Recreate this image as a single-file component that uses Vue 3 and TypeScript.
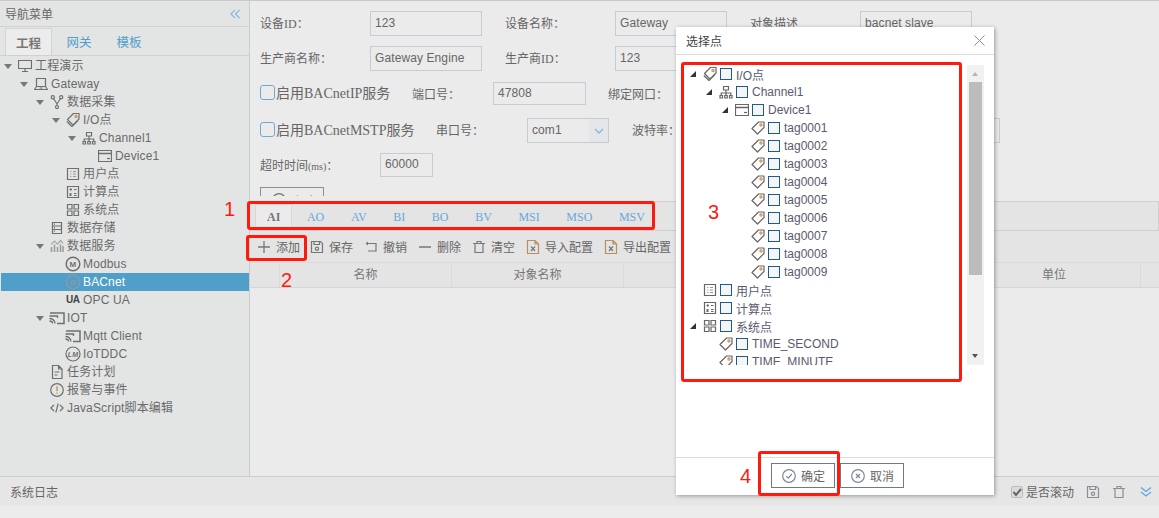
<script setup lang="ts">
interface NavRow { text: string; depth: number; icon: string; open?: boolean; active?: boolean }
interface PickRow { text: string; depth: number; icon: string; open?: boolean }

const navRows: NavRow[] = [
  { text: '工程演示', depth: 0, icon: 'monitor', open: true },
  { text: 'Gateway', depth: 1, icon: 'laptop', open: true },
  { text: '数据采集', depth: 2, icon: 'fork', open: true },
  { text: 'I/O点', depth: 3, icon: 'tags', open: true },
  { text: 'Channel1', depth: 4, icon: 'channel', open: true },
  { text: 'Device1', depth: 5, icon: 'device' },
  { text: '用户点', depth: 3, icon: 'list' },
  { text: '计算点', depth: 3, icon: 'calc' },
  { text: '系统点', depth: 3, icon: 'grid' },
  { text: '数据存储', depth: 2, icon: 'storage' },
  { text: '数据服务', depth: 2, icon: 'chart', open: true },
  { text: 'Modbus', depth: 3, icon: 'modbus' },
  { text: 'BACnet', depth: 3, icon: 'bacnet', active: true },
  { text: 'OPC UA', depth: 3, icon: 'ua' },
  { text: 'IOT', depth: 2, icon: 'cast', open: true },
  { text: 'Mqtt Client', depth: 3, icon: 'cast' },
  { text: 'IoTDDC', depth: 3, icon: 'lm' },
  { text: '任务计划', depth: 2, icon: 'doc' },
  { text: '报警与事件', depth: 2, icon: 'alert' },
  { text: 'JavaScript脚本编辑', depth: 2, icon: 'code' }
]

const wideIcons = ['modbus', 'bacnet', 'lm', 'cast']

const tags: PickRow[] = Array.from({ length: 9 }, (_, i) => ({
  text: `tag000${i + 1}`, depth: 3, icon: 'tag'
}))

const pickRows: PickRow[] = [
  { text: 'I/O点', depth: 0, icon: 'tags', open: true },
  { text: 'Channel1', depth: 1, icon: 'channel', open: true },
  { text: 'Device1', depth: 2, icon: 'device', open: true },
  ...tags,
  { text: '用户点', depth: 0, icon: 'list' },
  { text: '计算点', depth: 0, icon: 'calc' },
  { text: '系统点', depth: 0, icon: 'grid', open: true },
  { text: 'TIME_SECOND', depth: 1, icon: 'tag' },
  { text: 'TIME_MINUTE', depth: 1, icon: 'tag' }
]

const objectTabs = ['AI', 'AO', 'AV', 'BI', 'BO', 'BV', 'MSI', 'MSO', 'MSV']
const tools = [
  { text: '保存', icon: 'save' },
  { text: '撤销', icon: 'undo' },
  { text: '删除', icon: 'minus' },
  { text: '清空', icon: 'trash' },
  { text: '导入配置', icon: 'xls' },
  { text: '导出配置', icon: 'xls' }
]
const columns = ['名称', '对象名称', '', '', '单位']
</script>

<template>
  <div class="page">
    <svg class="defs" aria-hidden="true">
      <defs>
        <symbol id="monitor" viewBox="0 0 14 14"><path d="M.5 1.500h13v8H.5zM7 9.500v3M4 12.500h6" fill="none" stroke="currentColor" /></symbol>
        <symbol id="laptop" viewBox="0 0 14 14"><path d="M2.500 1.500h9v8h-9zM2.500 9.500L.5 12.500h13l-2-3M5.500 11h3" fill="none" stroke="currentColor" /></symbol>
        <symbol id="fork" viewBox="0 0 14 14"><path d="M3.500 3.500L7 9l3.500-5.500M7 9v2" fill="none" stroke="currentColor" /><circle cx="2.800" cy="2.300" r="1.600" fill="none" stroke="currentColor" /><circle cx="11.200" cy="2.300" r="1.600" fill="none" stroke="currentColor" /><circle cx="7" cy="12" r="1.500" fill="none" stroke="currentColor" /></symbol>
        <symbol id="tag" viewBox="0 0 14 14"><path d="M7.500 1h5.500v5.500l-6.500 6.500L1 7.500z" fill="none" stroke="currentColor" stroke-linejoin="round" /><circle cx="10" cy="4" r="1.100" fill="none" stroke="#c9914e" /></symbol>
        <symbol id="tags" viewBox="0 0 14 14"><path d="M7.500 .5h5.500v5.500l-6 6-5.500-5.500zM.8 8.500L6 13.500l6-6" fill="none" stroke="currentColor" stroke-linejoin="round" /><circle cx="10" cy="3.500" r="1.100" fill="none" stroke="#c9914e" /></symbol>
        <symbol id="channel" viewBox="0 0 14 14"><path d="M4.500 1.500h5v3.500h-5zM1 10.500h2.500v2.500H1zM5.750 10.500h2.500v2.500h-2.500zM10.500 10.500H13v2.500h-2.500zM7 5v5.500M2.250 10.500V8h9.500v2.500" fill="none" stroke="currentColor" /></symbol>
        <symbol id="device" viewBox="0 0 14 14"><path d="M.5 1.500h13v11H.5z" fill="none" stroke="currentColor" /><path d="M.5 4.500h13" stroke="currentColor" stroke-width="1.500" /><path d="M9 9.500h3" stroke="currentColor" /></symbol>
        <symbol id="list" viewBox="0 0 14 14"><path d="M1.500 1.500h11v11h-11z" fill="none" stroke="currentColor" /><path d="M4 4.500h1.500M4 7h1.500M4 9.500h1.500" stroke="#d6a26c" /><path d="M7 4.500h3M7 7h3M7 9.500h3" stroke="#8f9aa5" /></symbol>
        <symbol id="calc" viewBox="0 0 14 14"><path d="M1.500 1.500h11v11h-11zM3.500 4.500h2.500M4.750 3.250v2.500M8 4.500h2.500M3.500 8.500l2 2M5.500 8.500l-2 2M8 8.500h2.500M8 10.500h2.500" fill="none" stroke="currentColor" /></symbol>
        <symbol id="grid" viewBox="0 0 14 14"><path d="M1.500 1.500h4.500v4.500H1.500zM8 1.500h4.500v4.500H8zM1.500 8h4.500v4.500H1.500zM8 8h4.500v4.500H8z" fill="none" stroke="currentColor" /></symbol>
        <symbol id="storage" viewBox="0 0 14 14"><path d="M2.500 1.500h9v11h-9zM2.500 5h9M2.500 8.500h9" fill="none" stroke="currentColor" /><path d="M4 3.200h1M4 6.700h1M4 10.200h1" stroke="currentColor" /></symbol>
        <symbol id="chart" viewBox="0 0 14 14"><path d="M1.500 13V8M4.500 13V5.500M7.500 13V8M10.500 13V5.500M13 13V7" fill="none" stroke="#999" stroke-width="1.500" /><path d="M1 5.500L4.500 2 7.500 5 10.500 1.500l2.500 3" fill="none" stroke="#a9a9a9" /></symbol>
        <symbol id="modbus" viewBox="0 0 16 16"><circle cx="8" cy="8" r="6.800" fill="none" stroke="currentColor" stroke-width="1.500" /><text x="8" y="11" text-anchor="middle" font-size="8" font-weight="700" font-family="Liberation Sans" fill="currentColor">M</text></symbol>
        <symbol id="bacnet" viewBox="0 0 16 16"><circle cx="8" cy="8" r="6.800" fill="none" stroke="#8a9aa6" stroke-width="1.500" /><text x="8" y="11" text-anchor="middle" font-size="8" font-weight="700" font-family="Liberation Sans" fill="#8a9aa6">B</text></symbol>
        <symbol id="lm" viewBox="0 0 16 16"><circle cx="8" cy="8" r="7" fill="none" stroke="currentColor" /><text x="8" y="10.500" text-anchor="middle" font-size="7" font-weight="700" font-style="italic" font-family="Liberation Sans" fill="currentColor">LM</text></symbol>
        <symbol id="cast" viewBox="0 0 16 16"><path d="M1 3h14v10.500H8" fill="none" stroke="currentColor" stroke-width="1.500" /><path d="M.5 6h8v2M.5 8.500c3 0 5 2 5.500 5M.5 11c1.500 0 3 1 3 2.500" fill="none" stroke="currentColor" stroke-width="1.300" /></symbol>
        <symbol id="doc" viewBox="0 0 14 14"><path d="M2.500.5h6l3.500 3.500v9.500h-9.500zM8.500.5v3.500H12M4.500 7h5M4.500 10h3" fill="none" stroke="currentColor" /></symbol>
        <symbol id="alert" viewBox="0 0 14 14"><circle cx="7" cy="7" r="6.300" fill="none" stroke="currentColor" /><path d="M7 3.200v5M7 9.400v1.400" stroke="#c9914e" stroke-width="1.400" /></symbol>
        <symbol id="code" viewBox="0 0 14 14"><path d="M4 4L.8 7 4 10M10 4l3.200 3-3.200 3M8.200 2.500l-2.400 9" fill="none" stroke="currentColor" /></symbol>
        <symbol id="save" viewBox="0 0 14 14"><path d="M1.500 1.500h9l2 2v9h-11zM4 1.500v3h5.500v-3" fill="none" stroke="currentColor" /><circle cx="7" cy="8.800" r="1.600" fill="none" stroke="currentColor" /></symbol>
        <symbol id="undo" viewBox="0 0 14 14"><path d="M3 3.500h9v7.500H4" fill="none" stroke="currentColor" stroke-width="1.200" /><path d="M1.500 3.500L4 1.500v4z" fill="currentColor" /></symbol>
        <symbol id="minus" viewBox="0 0 14 14"><path d="M1 7h12" stroke="currentColor" stroke-width="1.500" /></symbol>
        <symbol id="trash" viewBox="0 0 14 14"><path d="M3 3.500v9h8v-9M1 3.500h12M5 3.500v-2h4v2" fill="none" stroke="currentColor" /></symbol>
        <symbol id="xls" viewBox="0 0 14 14"><path d="M1.500 .5h7.500l3.500 3.500v9.500h-11zM9 .5V4h3.500" fill="none" stroke="#b98f5f" /><path d="M5 6.500l4 4.500M9 6.500l-4 4.500" stroke="currentColor" /></symbol>
        <symbol id="ok" viewBox="0 0 14 14"><circle cx="7" cy="7" r="6.300" fill="none" stroke="currentColor" /><path d="M4.300 7.200l2 2 3.500-4.200" fill="none" stroke="currentColor" /></symbol>
        <symbol id="no" viewBox="0 0 14 14"><circle cx="7" cy="7" r="6.300" fill="none" stroke="currentColor" /><path d="M5 5l4 4M9 5l-4 4" stroke="currentColor" stroke-width="1.300" /></symbol>
        <symbol id="plus" viewBox="0 0 14 14"><path d="M7 1v12M1 7h12" stroke="currentColor" stroke-width="1.300" /></symbol>
      </defs>
    </svg>

    <div class="workspace">
      <aside class="nav">
        <header class="nav-head">
          <span>导航菜单</span>
          <svg class="collapse" viewBox="0 0 12 10"><path d="M5.500 .5L1 5l4.500 4.500M10.500 .5L6 5l4.500 4.500" fill="none" stroke="currentColor" stroke-width="1.200" /></svg>
        </header>
        <div class="nav-tabs">
          <span class="nav-tab on">工程</span>
          <span class="nav-tab">网关</span>
          <span class="nav-tab">模板</span>
        </div>
        <ul class="nav-tree">
          <li
            v-for="row in navRows"
            :key="row.text"
            class="nav-row"
            :class="{ active: row.active }"
            :style="{ paddingLeft: 4 + row.depth * 16 - (row.active ? 1 : 0) + 'px' }"
          >
            <i class="caret" :class="{ shown: row.open }"></i>
            <b v-if="row.icon === 'ua'" class="ua">UA</b>
            <svg v-else class="ic" :class="{ wide: wideIcons.includes(row.icon) }"><use :href="'#' + row.icon" /></svg>
            <span class="nav-text">{{ row.text }}</span>
          </li>
        </ul>
      </aside>

      <main class="content">
        <section class="form">
          <div class="line r1">
            <label class="lab w110">设备ID：</label><span class="inp w112 mr23">123</span>
            <label class="lab w110">设备名称：</label><span class="inp w112 mr23">Gateway</span>
            <label class="lab w110">对象描述</label><span class="inp w112">bacnet slave</span>
          </div>
          <div class="line r2">
            <label class="lab w110">生产商名称：</label><span class="inp w112 mr23">Gateway Engine</span>
            <label class="lab w110">生产商ID：</label><span class="inp w112">123</span>
          </div>
          <div class="line r3">
            <i class="check"></i><label class="big w136">启用BACnetIP服务</label>
            <label class="lab w81">端口号：</label><span class="inp w93 mr22">47808</span>
            <label class="lab">绑定网口：</label>
          </div>
          <div class="line r4">
            <i class="check"></i><label class="big w160">启用BACnetMSTP服务</label>
            <label class="lab w91">串口号：</label>
            <span class="inp sel mr23">com1<em class="sel-btn"><svg viewBox="0 0 10 6"><path d="M1 1l4 4 4-4" fill="none" stroke="currentColor" stroke-width="1.500" /></svg></em></span>
            <label class="lab w60">波特率：</label><span class="inp w308"></span>
          </div>
          <div class="line r5">
            <label class="lab w120">超时时间<small>(ms)</small>：</label><span class="inp w53">60000</span>
          </div>
          <button class="form-save" type="button"><svg class="ic save-ic"><use href="#ok" /></svg>保存</button>
        </section>

        <nav class="obj-tabs">
          <span v-for="t in objectTabs" :key="t" class="obj-tab" :class="{ on: t === 'AI' }">{{ t }}</span>
        </nav>

        <div class="toolbar">
          <span class="tool first"><svg class="ic tool-ic"><use href="#plus" /></svg>添加</span>
          <span v-for="t in tools" :key="t.text" class="tool"><svg class="ic tool-ic"><use :href="'#' + t.icon" /></svg>{{ t.text }}</span>
        </div>

        <div class="thead">
          <span class="th-lead"></span>
          <span v-for="(c, i) in columns" :key="i" class="th">{{ c }}</span>
        </div>
      </main>
    </div>

    <footer class="log">
      <span class="log-title">系统日志</span>
      <span class="log-side">
        <i class="log-check"><svg viewBox="0 0 10 10"><path d="M1.500 5l2.500 3 5-6" fill="none" stroke="#666" stroke-width="2" /></svg></i>
        <span class="log-text">是否滚动</span>
        <svg class="ic log-ic"><use href="#save" /></svg>
        <svg class="ic log-ic"><use href="#trash" /></svg>
        <svg class="log-down" viewBox="0 0 12 12"><path d="M1 1.500l5 4 5-4M1 6l5 4 5-4" fill="none" stroke="currentColor" stroke-width="1.300" /></svg>
      </span>
    </footer>
    <div class="foot-strip"></div>

    <div class="dialog">
      <header class="dlg-head">
        <span>选择点</span>
        <svg class="dlg-close" viewBox="0 0 11 11"><path d="M.5 .5l10 10M10.500 .5l-10 10" stroke="currentColor" /></svg>
      </header>
      <div class="dlg-body">
        <div class="pick">
          <div
            v-for="row in pickRows"
            :key="row.text"
            class="pick-row"
            :style="{ paddingLeft: 14 + row.depth * 16 + 'px' }"
          >
            <i class="tri" :class="{ shown: row.open }"></i>
            <svg class="ic pick-ic"><use :href="'#' + row.icon" /></svg>
            <i class="box"></i>
            <span>{{ row.text }}</span>
          </div>
        </div>
        <div class="scroll">
          <i class="arrow up"></i>
          <i class="thumb"></i>
          <i class="arrow down"></i>
        </div>
      </div>
      <footer class="dlg-foot">
        <button class="btn" type="button"><svg class="ic btn-ic"><use href="#ok" /></svg>确定</button>
        <button class="btn" type="button"><svg class="ic btn-ic"><use href="#no" /></svg>取消</button>
      </footer>
    </div>

    <i class="mark m1"></i>
    <i class="mark m2"></i>
    <i class="mark m3"></i>
    <i class="mark m4"></i>
    <span class="digit d1">1</span>
    <span class="digit d2">2</span>
    <span class="digit d3">3</span>
    <span class="digit d4">4</span>
  </div>
</template>

<style>
html, body { margin: 0; background: #ebebeb; }
</style>

<style scoped>
.page {
  position: relative;
  width: 1159px;
  height: 518px;
  overflow: hidden;
  display: flex;
  flex-direction: column;
  border-top: 1px solid #c9c9c9;
  box-sizing: border-box;
  background: #ebebeb;
  color: #666;
  font: 12px "Liberation Sans", "Noto Sans CJK SC", sans-serif;
}
.defs { position: absolute; width: 0; height: 0; }
.ic { width: 14px; height: 14px; flex: none; color: #6f6f6f; stroke-width: 1.2; }
.ic.wide { width: 16px; height: 16px; margin: -1px -1px -1px -1px; }

.workspace { display: flex; height: 475px; flex: none; }

.nav {
  width: 250px;
  box-sizing: border-box;
  flex: none;
  background: #e3e5e5;
  border-right: 1px solid #cdcdcd;
}
.nav-head {
  height: 26px;
  box-sizing: border-box;
  border-bottom: 1px solid #d0d0d0;
  display: flex;
  align-items: center;
  justify-content: space-between;
  padding: 0 8px 0 5px;
  color: #666;
}
.collapse { width: 11px; height: 10px; color: #7fb4dc; }
.nav-tabs {
  height: 29px;
  box-sizing: border-box;
  border-bottom: 1px solid #d0d0d0;
  display: flex;
  align-items: flex-end;
  padding-left: 5px;
}
.nav-tab {
  width: 50px;
  height: 27px;
  box-sizing: border-box;
  text-align: center;
  line-height: 30px;
  font-size: 12.500px;
  color: #4f9fcb;
}
.nav-tab.on {
  width: 47px;
  margin-right: 2px;
  background: #ececec;
  color: #777;
  font-weight: 700;
  border: 1px solid #d4d4d4;
  border-bottom: 0;
}
.nav-tree { list-style: none; margin: 0; padding: 1px 0 0 0; }
.nav-row {
  height: 18px;
  display: flex;
  align-items: center;
  line-height: 18px;
  color: #6a6a6a;
  letter-spacing: .15px;
  white-space: nowrap;
}
.nav-row.active { background: #4f9fc9; color: #fff; margin-left: 1px; }
.caret { width: 14px; flex: none; height: 0; }
.caret.shown::before {
  content: "";
  display: block;
  width: 0;
  height: 0;
  margin-top: -2px;
  border-left: 4.500px solid transparent;
  border-right: 4.500px solid transparent;
  border-top: 5px solid #777;
}
.nav-text { margin-left: 3px; }
.ua { width: 14px; flex: none; font-size: 10px; color: #444; font-weight: 700; letter-spacing: -.4px; }

.content { flex: 1; min-width: 0; display: flex; flex-direction: column; }
.form { height: 195px; margin-bottom: 5px; flex: none; overflow: hidden; box-sizing: border-box; padding: 10px 0 0 10px; }
.line { display: flex; align-items: center; white-space: nowrap; }
.r1 { height: 25px; margin-bottom: 10px; }
.r2 { height: 25px; margin-bottom: 11px; }
.r3 { height: 23px; margin-bottom: 13px; }
.r4 { height: 25px; margin-bottom: 10px; }
.r5 { height: 24px; margin-bottom: 10px; }
.lab { font-family: "Liberation Serif", "Noto Sans CJK SC", serif; font-size: 12px; color: #666; flex: none; }
.r1 .lab, .r2 .lab, .r4 .lab { margin-top: -2px; }
.lab small { font-size: 10px; }
.big { font-family: "Liberation Serif", "Noto Sans CJK SC", serif; font-size: 14px; color: #666; flex: none; margin-top: -3px; }
.inp {
  height: 100%;
  box-sizing: border-box;
  flex: none;
  border: 1px solid #c6ccd6;
  padding: 0 0 2px 4px;
  letter-spacing: .1px;
  color: #666;
  display: flex;
  align-items: center;
}
.w110 { width: 110px; }
.w112 { width: 112px; }
.w136 { width: 136px; }
.w160 { width: 160px; }
.w81 { width: 81px; }
.w91 { width: 91px; }
.w93 { width: 93px; }
.w60 { width: 60px; }
.w53 { width: 53px; }
.w120 { width: 120px; }
.w308 { width: 308px; }
.mr23 { margin-right: 23px; }
.mr22 { margin-right: 22px; }
.check {
  width: 15px;
  height: 15px;
  box-sizing: border-box;
  flex: none;
  border: 1px solid #6fa9d8;
  border-radius: 3px;
  margin-right: 1px;
  margin-top: -3px;
}
.sel { width: 82px; position: relative; }
.sel-btn {
  position: absolute;
  top: 0;
  right: 0;
  bottom: 0;
  width: 19px;
  background: #e4e6e9;
  display: flex;
  align-items: center;
  justify-content: center;
  color: #8dbbe0;
}
.sel-btn svg { width: 10px; height: 6px; }
.form-save {
  width: 64px;
  height: 26px;
  box-sizing: border-box;
  background: transparent;
  border: 1px solid #8a9097;
  padding: 0 0 0 11px;
  font: inherit;
  color: #666;
  display: flex;
  align-items: center;
}
.save-ic { margin-right: 8px; }

.obj-tabs {
  height: 30px;
  box-sizing: border-box;
  flex: none;
  display: flex;
  align-items: flex-end;
  gap: 2.600px;
  padding-left: 5px;
  background: #e4e4e4;
  border-top: 1px solid #cfcfcf;
  border-bottom: 1px solid #cfcfcf;
  border-right: 1px solid #cfcfcf;
}
.obj-tab {
  height: 25px;
  box-sizing: border-box;
  padding: 0 12px;
  font: 12px/25px "Liberation Serif", serif;
  color: #68a8da;
}
.obj-tab.on { height: 26px; background: #ebebeb; color: #777; font-weight: 700; border: 1px solid #d8d8d8; border-bottom: 0; padding: 0 11px; }

.toolbar {
  height: 31px;
  flex: none;
  background: #e4e4e4;
  display: flex;
  align-items: center;
  padding-left: 8px;
  color: #666;
}
.tool { display: flex; align-items: center; margin-right: 12px; white-space: nowrap; }
.tool.first { margin-right: 11px; }
.tool-ic { margin: 0 5px 0 -1px; color: #777; }

.thead {
  height: 26px;
  box-sizing: border-box;
  flex: none;
  display: grid;
  grid-template-columns: 30px repeat(4, 172px) 173px 1fr;
  background: #e4e4e4;
  border-top: 1px solid #dadada;
  border-bottom: 1px solid #d6d6d6;
}
.th { text-align: center; line-height: 24px; color: #777; border-right: 1px solid #dadada; }
.th-lead { border-right: 1px solid #dadada; }

.log {
  height: 30px;
  flex: none;
  box-sizing: border-box;
  border-top: 1px solid #cdcdcd;
  background: #e6e6e6;
  display: flex;
  align-items: center;
  justify-content: space-between;
  padding: 0 7px 0 10px;
  color: #666;
}
.log-side { display: flex; align-items: center; }
.log-check {
  width: 12px;
  height: 12px;
  box-sizing: border-box;
  background: #dcdcdc;
  border: 1px solid #bbb;
  border-radius: 2px;
  margin-right: 3px;
  display: flex;
}
.log-check svg { width: 10px; height: 10px; }
.log-text { margin-right: 12px; }
.log-ic { margin-right: 12px; color: #8a8f96; }
.log-down { width: 12px; height: 12px; margin-left: 2px; color: #5ba6e0; }
.foot-strip { flex: 1; background: #ececec; }

.dialog {
  position: absolute;
  left: 676px;
  top: 26px;
  width: 318px;
  height: 468px;
  background: #fff;
  box-shadow: 1px 1px 4px rgba(0, 0, 0, .35);
  display: flex;
  flex-direction: column;
  color: #555;
}
.dlg-head {
  height: 28px;
  box-sizing: border-box;
  flex: none;
  border-bottom: 1px solid #dcdcdc;
  display: flex;
  align-items: center;
  justify-content: space-between;
  padding: 0 9px 0 10px;
  color: #444;
}
.dlg-close { width: 11px; height: 11px; color: #8d8d8d; }
.dlg-body { flex: 1; display: flex; align-items: flex-start; padding-top: 10px; min-height: 0; }
.pick { width: 291px; height: 300px; overflow: hidden; flex: none; }
.pick-row {
  height: 18px;
  display: flex;
  align-items: center;
  white-space: nowrap;
  color: #5a5a6e;
}
.tri { width: 14px; flex: none; height: 6px; position: relative; }
.tri.shown::before {
  content: "";
  position: absolute;
  left: 0;
  top: 0;
  border-left: 6px solid transparent;
  border-bottom: 6px solid #333;
}
.pick-ic { margin: 0 3px 0 -1px; color: #666; }
.box {
  width: 12px;
  height: 12px;
  flex: none;
  box-sizing: border-box;
  border: 1px solid #1f5a8a;
  background: #f5f5f5;
  margin-right: 4px;
}
.scroll {
  width: 17px;
  height: 300px;
  flex: none;
  background: #f1f1f1;
  position: relative;
}
.thumb { position: absolute; left: 2px; right: 2px; top: 17px; height: 193px; background: #bcbcbc; }
.arrow { position: absolute; left: 5px; width: 0; height: 0; border-left: 3.500px solid transparent; border-right: 3.500px solid transparent; }
.arrow.up { top: 7px; border-bottom: 4px solid #b5b5b5; }
.arrow.down { bottom: 7px; border-top: 4px solid #555; }
.dlg-foot {
  height: 38px;
  box-sizing: border-box;
  flex: none;
  border-top: 1px solid #dcdcdc;
  display: flex;
  align-items: flex-start;
  gap: 5px;
  padding: 5px 0 0 95px;
}
.btn {
  width: 64px;
  height: 25px;
  box-sizing: border-box;
  background: #fff;
  border: 1px solid #707a84;
  padding: 0 0 0 10px;
  font: inherit;
  color: #666;
  display: flex;
  align-items: center;
}
.btn-ic { margin-right: 5px; color: #7b8a9a; }

.mark { position: absolute; box-sizing: border-box; border: 3px solid #ff1a0d; border-radius: 3px; }
.m1 { left: 247px; top: 200px; width: 408px; height: 29px; }
.m2 { left: 246px; top: 234px; width: 61px; height: 26px; }
.m3 { left: 681px; top: 61px; width: 281px; height: 320px; }
.m4 { left: 758px; top: 450px; width: 82px; height: 45px; }
.digit { position: absolute; font: 20px/24px "Liberation Sans", sans-serif; color: #ff1a0d; }
.d1 { left: 224px; top: 196px; }
.d2 { left: 281px; top: 267px; }
.d3 { left: 708px; top: 199px; }
.d4 { left: 740px; top: 463px; }
</style>
